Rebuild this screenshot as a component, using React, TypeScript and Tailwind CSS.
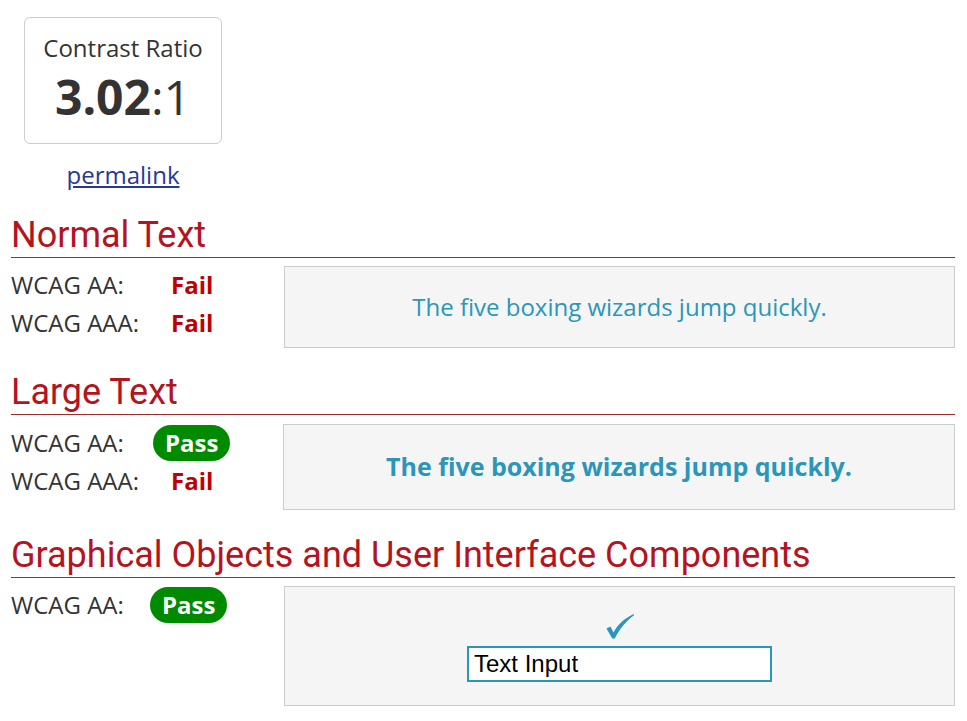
import { ReactNode } from 'react';

const FG = '#2b96b9';

function Heading({ children }: { children: ReactNode }) {
  return (
    <h2 className="border-b border-[#a32a2a] pb-[2px] text-[36px] leading-[40px] text-[#b3141d] font-['Roboto',sans-serif]">
      {children}
    </h2>
  );
}

function Fail() {
  return <span className="ml-[18px] font-bold text-[#c00000]">Fail</span>;
}

function Pass() {
  return (
    <span className="inline-block rounded-full bg-[#008a00] px-[12px] leading-[36px] font-bold text-white">Pass</span>
  );
}

function Row({ label, children }: { label: string; children: ReactNode }) {
  return (
    <div className="flex h-[38px] items-center">
      <span className="w-[142px]">{label}</span>
      {children}
    </div>
  );
}

function Check() {
  return (
    <svg width="28" height="25" viewBox="0 0 28 25" fill={FG}>
      <path d="M0.5 14.5 L4.5 12.5 L7.5 18.5 C12 10 19 4 28 0 L28 1.2 C20 7 13.5 15 8.8 24.5 L6.2 24.5 Z" />
    </svg>
  );
}

export default function App() {
  return (
    <div className="min-h-[721px] bg-white pl-[11px] pr-[12px] text-[24px] text-[#333] font-['Open_Sans',sans-serif]">
      <div className="flex w-[224px] flex-col items-center pt-[17px]">
        <div className="flex h-[127px] w-[198px] flex-col items-center rounded-md border border-[#ccc] pt-[14px]">
          <div className="text-[24px] leading-[32px]">Contrast Ratio</div>
          <div className="mt-[3px] text-[48px] leading-[60px]">
            <b>3.02</b>:1
          </div>
        </div>
        <a href="#" className="mt-[13px] leading-[36px] text-[#26399a] underline">permalink</a>
      </div>

      <div className="mt-[22px]">
        <Heading>Normal Text</Heading>
        <div className="mt-[8px] flex">
          <div className="w-[273px]">
            <Row label="WCAG AA:"><Fail /></Row>
            <Row label="WCAG AAA:"><Fail /></Row>
          </div>
          <div className="flex h-[82px] flex-1 items-center justify-center border border-[#ccc] bg-[#f5f5f5]" style={{ color: FG }}>
            The five boxing wizards jump quickly.
          </div>
        </div>
      </div>

      <div className="mt-[24px]">
        <Heading>Large Text</Heading>
        <div className="mt-[9px] flex">
          <div className="w-[272px]">
            <Row label="WCAG AA:"><Pass /></Row>
            <Row label="WCAG AAA:"><Fail /></Row>
          </div>
          <div className="flex h-[86px] flex-1 items-center justify-center border border-[#ccc] bg-[#f5f5f5] text-[25px] font-bold" style={{ color: FG }}>
            The five boxing wizards jump quickly.
          </div>
        </div>
      </div>

      <div className="mt-[25px]">
        <Heading>Graphical Objects and User Interface Components</Heading>
        <div className="mt-[8px] flex">
          <div className="w-[273px]">
            <div className="flex h-[38px] items-center">
              <span className="w-[139px]">WCAG AA:</span>
              <Pass />
            </div>
          </div>
          <div className="flex h-[120px] flex-1 flex-col items-center justify-center border border-[#ccc] bg-[#f5f5f5]">
            <div className="flex h-[32px] items-center">
              <Check />
            </div>
            <input
              readOnly
              value="Text Input"
              className="mt-[4px] h-[36px] w-[305px] border-2 bg-white px-[5px] text-[24px] text-black font-['Liberation_Sans',Arial,sans-serif] outline-none"
              style={{ borderColor: FG }}
            />
          </div>
        </div>
      </div>
    </div>
  );
}
